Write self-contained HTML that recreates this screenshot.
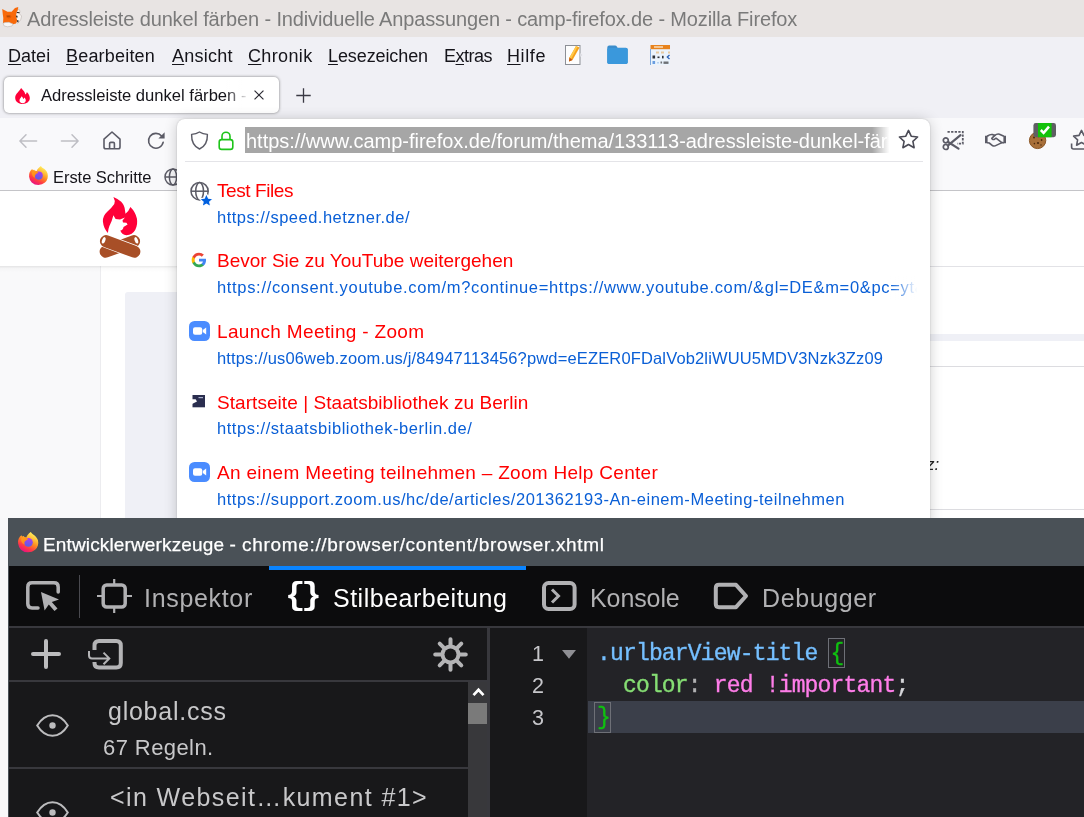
<!DOCTYPE html>
<html lang="de">
<head>
<meta charset="utf-8">
<title>Adressleiste dunkel färben - Individuelle Anpassungen - camp-firefox.de - Mozilla Firefox</title>
<style>
html,body{margin:0;padding:0;}
body{width:1084px;height:817px;overflow:hidden;position:relative;background:#fff;font-family:"Liberation Sans",sans-serif;color:#15141a;}
.abs{position:absolute;}
.t{position:absolute;white-space:pre;line-height:1;will-change:transform;}
svg{position:absolute;overflow:visible;}
/* title bar */
#titlebar{left:0;top:0;width:1084px;height:37px;background:#e8e4e3;}
#titletext{left:27px;top:8.7px;font-size:20px;color:#7a7a7a;letter-spacing:-0.14px;}
/* menubar + tabs */
#chrome{left:0;top:37px;width:1084px;height:81px;background:#f0f0f5;}
.menu{top:46.5px;font-size:18px;color:#15141a;}
.menu u{text-decoration:underline;text-underline-offset:2px;text-decoration-thickness:1px;}
#tab{left:4px;top:77px;width:275px;height:36px;background:#fff;border-radius:5px;box-shadow:0 0 3px rgba(0,0,0,.5);}
#tabtext{left:40.5px;top:88.4px;font-size:16.6px;width:208px;height:20px;overflow:hidden;letter-spacing:-0.01px;}
#tabfade{left:226px;top:80px;width:23px;height:30px;background:linear-gradient(90deg,rgba(255,255,255,0),#fff);}
/* navbar */
#navbar{left:0;top:118px;width:1084px;height:72px;background:#f9f9fb;}
#navline{left:0;top:190px;width:1084px;height:1px;background:#c4c4c8;}
#bm1{left:53px;top:168.5px;font-size:16.5px;letter-spacing:-0.05px;}
.rt{left:217.4px;font-size:19px;color:#ff0000;}
.ru{left:217.4px;font-size:16.5px;color:#0a5fd6;}
.dtt{top:586px;font-size:25px;}
.ln{left:531.5px;width:12px;text-align:right;font-size:21.5px;color:#c6c6ca;}
.mono{font-family:"Liberation Mono",monospace;font-size:23px;letter-spacing:-0.83px;-webkit-text-stroke-width:0.35px;}
</style>
</head>
<body>
<!-- ===== window title bar ===== -->
<div id="titlebar" class="abs"></div>
<svg id="foxicon" style="left:0;top:0" width="24" height="30" viewBox="0 0 24 30">
  <path d="M16.600 12.200 L18.500 8.800 L20 11 L19.400 13.800 L21.600 16 L20.800 19.400 L19.400 21.600 L17.500 23.400 L15.500 21 L15.500 15 Z" fill="#f6f3f1" stroke="#bdb6b1" stroke-width="0.600"/>
  <path d="M2.200 9.100 L7.500 11.800 L11.600 11.800 L15 8 L18.300 6.900 L17.700 10 L16.600 12.200 L16 16 L17.200 20.500 L16 23.500 L13 24.300 L9 22.500 L5 22.700 L3 23.500 L3.300 18 L2.800 14.400 Z" fill="#f8690a"/>
  <path d="M3 23.300 L5 22.500 L9 22.300 L13 24.100 L12 26 L7.500 26.800 L4.200 26 Z" fill="#f8f6f4" stroke="#bdb6b1" stroke-width="0.600"/>
  <path d="M6 15.600 L10.500 15.400 L11.500 16.400 L10.800 17.800 L8.500 18.400 L6.500 17.400 Z" fill="#e25a04"/>
  <path d="M6.600 15.700 L10.400 15.800 L9.600 16.500 L7.200 16.400 Z" fill="#8a3a08"/>
  <path d="M16 15.600 L17.400 15.800 L17.600 17.400 L16.300 17.600 Z M17.200 20 L18.600 20.400 L18.300 22.600 L17.200 22 Z M16.800 12 L19.600 12.300 L19.400 13.200 L16.900 13 Z" fill="#1e1a18"/>
</svg>
<div id="titletext" class="t">Adressleiste dunkel färben - Individuelle Anpassungen - camp-firefox.de - Mozilla Firefox</div>

<!-- ===== menu bar / tab strip ===== -->
<div id="chrome" class="abs"></div>
<div class="t menu" style="left:8.3px;letter-spacing:0.03px"><u>D</u>atei</div>
<div class="t menu" style="left:66.4px;letter-spacing:0.19px"><u>B</u>earbeiten</div>
<div class="t menu" style="left:171.7px;letter-spacing:0.25px"><u>A</u>nsicht</div>
<div class="t menu" style="left:248.4px;letter-spacing:0.35px"><u>C</u>hronik</div>
<div class="t menu" style="left:328px;letter-spacing:-0.1px"><u>L</u>esezeichen</div>
<div class="t menu" style="left:444px;letter-spacing:-0.5px">E<u>x</u>tras</div>
<div class="t menu" style="left:507px;letter-spacing:0.6px"><u>H</u>ilfe</div>
<!-- menu bar icons -->
<svg style="left:565px;top:45px" width="18" height="20" viewBox="0 0 18 20">
  <rect x="0.5" y="0.5" width="14.5" height="19" fill="#fdfdfd" stroke="#8c8f96" stroke-width="1"/>
  <path d="M11 1 L14.5 2.5 L7.5 15 L4 16.5 L4.5 12.5 Z" fill="#f7a21b"/>
  <path d="M11 1 L12.6 1.7 L5.8 14.6 L4.2 15 L4.5 12.5 Z" fill="#ffc94a"/>
  <path d="M4.5 12.5 L7.5 15 L4 16.5 Z" fill="#c0531a"/>
  <path d="M15 8 l2.5 2 l-2.5 2z" fill="#dcdce2"/>
</svg>
<svg style="left:606.5px;top:45px" width="21" height="20" viewBox="0 0 21 20">
  <path d="M0.3 2.5 Q0.3 0.6 2.2 0.6 L8 0.6 Q9.3 0.6 10 1.8 L10.6 2.8 L18.8 2.8 Q20.7 2.8 20.7 4.6 L20.7 17.2 Q20.7 19 18.8 19 L2.2 19 Q0.3 19 0.3 17.2 Z" fill="#3b8dcc"/>
  <path d="M0.3 4.6 Q0.3 2.9 2.2 2.9 L18.8 2.9 Q20.7 2.9 20.7 4.6 L20.7 17.2 Q20.7 19 18.8 19 L2.2 19 Q0.3 19 0.3 17.2 Z" fill="#3a98dc"/>
</svg>
<svg style="left:650px;top:45px" width="20" height="20" viewBox="0 0 20 20">
  <rect x="0" y="0" width="20" height="20" fill="#eaf3fc"/>
  <rect x="0.5" y="0" width="19.5" height="4.2" fill="#e8831d"/>
  <rect x="4" y="1.3" width="9" height="1.4" fill="#fbe3c4"/>
  <rect x="0" y="4" width="1" height="16" fill="#7fa9dc"/>
  <g fill="#e6c9a0"><rect x="6" y="6.5" width="3" height="2"/><rect x="11" y="6.5" width="3" height="2"/><rect x="18" y="6.5" width="2" height="2"/></g>
  <g fill="#2c3138"><rect x="2.5" y="10.5" width="2.6" height="3"/><rect x="7.5" y="11.5" width="2" height="1.6"/><rect x="12" y="10.8" width="1.6" height="2.6"/></g>
  <path d="M19.5 10 l-2.2 2 l2.2 2" stroke="#2b62b8" stroke-width="1.3" fill="none"/>
  <rect x="2.5" y="16" width="2.6" height="3" fill="#6a9de0"/><rect x="7" y="17" width="2" height="1.5" fill="#b8d2f0"/>
  <g fill="#6d7075"><rect x="10.5" y="16.5" width="1.6" height="2"/><rect x="13.5" y="16.5" width="5" height="2.4"/></g>
</svg>
<!-- selected tab -->
<div id="tab" class="abs"></div>
<svg style="left:15px;top:87.5px" width="15" height="16" viewBox="0 0 15 16">
  <path d="M6.2 0 C7.6 2.4 10.3 3.6 10.2 6.6 C11.2 6 11.7 4.9 11.8 4 C13.9 6 15 8.3 14.8 10.6 C14.5 13.8 11.6 16 7.6 16 C3.4 16 0.3 13.6 0.2 10 C0.1 6.4 3.2 4.2 4.6 2.2 C5.2 1.4 5.8 0.7 6.2 0 Z" fill="#ff0039"/>
  <path d="M7.6 15.2 C5.6 15.2 4.4 13.9 4.5 12.3 C4.6 10.6 6 9.8 6.7 8.3 C7.6 9.2 8 10 8.1 11 C8.7 10.6 9.1 10 9.2 9.4 C10.4 10.4 10.9 11.5 10.8 12.6 C10.7 14.2 9.4 15.2 7.6 15.2 Z" fill="#fff"/>
</svg>
<div id="tabtext" class="t">Adressleiste dunkel färben - Individuelle Anpassungen</div>
<div id="tabfade" class="abs"></div>
<svg style="left:254px;top:90.3px" width="10" height="10" viewBox="0 0 11 11"><path d="M0.6 0.6 L10.4 10.4 M10.4 0.6 L0.6 10.4" stroke="#2b2a33" stroke-width="1.3" fill="none"/></svg>
<svg style="left:296.300px;top:88.100px" width="15" height="15" viewBox="0 0 16 16"><path d="M8 0.3 V15.7 M0.3 8 H15.7" stroke="#3a3944" stroke-width="1.4" fill="none"/></svg>

<!-- ===== navigation toolbar + bookmarks toolbar ===== -->
<div id="navbar" class="abs"></div>
<div id="navline" class="abs"></div>
<svg style="left:19px;top:133.5px" width="18" height="14" viewBox="0 0 18 14"><path d="M17.6 7 H1.2 M7 0.8 L0.9 7 L7 13.2" stroke="#bebec4" stroke-width="1.5" fill="none" stroke-linecap="round" stroke-linejoin="round"/></svg>
<svg style="left:61px;top:133.5px" width="18" height="14" viewBox="0 0 18 14"><path d="M0.4 7 H16.8 M11 0.8 L17.1 7 L11 13.2" stroke="#bebec4" stroke-width="1.5" fill="none" stroke-linecap="round" stroke-linejoin="round"/></svg>
<svg style="left:103px;top:131px" width="18" height="19" viewBox="0 0 18 19"><path d="M1 8.2 L9 1 L17 8.2 V16 Q17 17.8 15.2 17.8 H2.8 Q1 17.8 1 16 Z M6.6 17.6 V12.6 Q6.6 11.4 7.8 11.4 H10.2 Q11.4 11.4 11.4 12.6 V17.6" stroke="#5b5b66" stroke-width="1.6" fill="none" stroke-linejoin="round"/></svg>
<svg style="left:147px;top:131px" width="19" height="19" viewBox="0 0 19 19"><path d="M16.2 11.2 A7.4 7.4 0 1 1 14.6 5" stroke="#5b5b66" stroke-width="1.6" fill="none" stroke-linecap="round"/><path d="M17.6 1.2 V7.4 H11.4 Z" fill="#5b5b66"/></svg>
<!-- bookmarks -->
<svg width="0" height="0" style="left:0;top:0"><defs>
<linearGradient id="fxg" x1="0.800" y1="0.080" x2="0.300" y2="0.980"><stop offset="0" stop-color="#fff060"/><stop offset="0.250" stop-color="#ffc13a"/><stop offset="0.480" stop-color="#ff8a20"/><stop offset="0.750" stop-color="#ff3b44"/><stop offset="1" stop-color="#ea1081"/></linearGradient>
<linearGradient id="fxp" x1="0.600" y1="0" x2="0.400" y2="1"><stop offset="0" stop-color="#b13af2"/><stop offset="1" stop-color="#5560e4"/></linearGradient>
<linearGradient id="fxa" x1="0" y1="0" x2="1" y2="1"><stop offset="0" stop-color="#ffa11c"/><stop offset="1" stop-color="#ff7a1c"/></linearGradient>
<g id="fxlogo"><path d="M12.750 0 Q14 1.800 15.200 2.500 Q16.800 3.300 17.650 4.420 Q19.200 6.100 19.900 8 Q20.600 10.600 19.900 13.400 Q19.100 16.100 17.160 17.800 Q14.200 20.350 10.050 20.350 Q5.900 20.350 2.940 17.650 Q0.500 15.200 0.100 11.600 Q-0.200 8.600 0.740 6.600 Q1.900 4.100 3.430 3.200 Q3.700 4.200 4.400 4.400 Q5 3.800 5.640 3.930 Q6.300 4.800 6.870 5.150 L8.300 5.400 Q8.800 3.800 9.800 2.800 Q11 1.200 12.750 0 Z" fill="url(#fxg)"/><circle cx="10.400" cy="10.300" r="4.400" fill="url(#fxp)"/><path d="M3.400 6.500 Q5.500 5.300 8.300 5.600 Q10 6.600 10 7.600 Q8.800 8 8 8.400 Q6.600 9.200 6.400 10.600 Q6.300 11.600 6.700 12.600 Q4.500 12 3.600 9.800 Q3 8 3.400 6.500 Z" fill="url(#fxa)"/></g>
</defs></svg>
<svg style="left:28.5px;top:166px" width="19" height="19" viewBox="0 0 20.400 20.400"><use href="#fxlogo"/></svg>
<div id="bm1" class="t">Erste Schritte</div>
<svg style="left:164px;top:167.5px" width="18" height="18" viewBox="0 0 18 18"><g stroke="#5b5b66" stroke-width="1.5" fill="none"><circle cx="9" cy="9" r="8"/><ellipse cx="9" cy="9" rx="3.6" ry="8"/><path d="M1 9 H17"/></g></svg>
<!-- ===== page content (behind popup) ===== -->
<div class="abs" style="left:0;top:191px;width:1084px;height:75px;background:#fff;"></div>
<div class="abs" style="left:0;top:266px;width:1084px;height:252px;background:#f9f9fa;"></div>
<div class="abs" style="left:100px;top:266px;width:984px;height:252px;background:#fff;border-left:1px solid #ececef;box-sizing:border-box;"></div>
<div class="abs" style="left:0;top:266px;width:1084px;height:6px;background:linear-gradient(180deg,rgba(0,0,0,.085),rgba(0,0,0,.02) 40%,rgba(0,0,0,0));"></div>
<div class="abs" style="left:125px;top:291.5px;width:959px;height:49px;background:#eff0f6;border-radius:3px 0 0 0;"></div>
<div class="abs" style="left:125px;top:334px;width:959px;height:184px;background:#eff0f6;"></div>
<div class="abs" style="left:930px;top:266px;width:154px;height:68px;background:#fff;"></div>
<div class="abs" style="left:930px;top:266px;width:154px;height:1px;background:#e2e2e6;"></div>
<div class="abs" style="left:930px;top:341px;width:154px;height:177px;background:#fff;"></div>
<div class="abs" style="left:930px;top:366px;width:154px;height:1px;background:#dcdce0;"></div>
<div class="abs" style="left:930px;top:509px;width:154px;height:1px;background:#dcdce0;"></div>
<div class="t" style="left:925.500px;top:456px;font-size:17px;font-style:italic;color:#222;">z:</div>
<!-- campfire logo -->
<svg style="left:90px;top:190px" width="60" height="75" viewBox="0 0 60 75">
  <path d="M23.4 6.9 Q27.500 8.200 31.200 11.800 Q34.800 15.600 35.100 21 L35.500 23.800 Q38.600 21.500 40.400 17 Q45.500 22 46.900 28.500 Q48 34.500 45.200 40 Q42.500 44.800 36.500 45.200 Q31.500 44.800 30.300 40.600 Q33 40.200 33.500 37 L37.600 34.400 L36.400 32.800 L33 32.600 L32.500 30.600 L34.900 27.500 L30 29.500 L25.600 29 L23.400 25.200 Q22 31 19.400 36 Q18 39.500 17.900 42.900 Q13.600 38.500 12.900 31.500 Q12.600 26 17 22 Q22 17.500 24.300 14 Q25.500 10.500 23.400 6.900 Z" fill="#ff0039"/>
  <g transform="rotate(-20.250 29.850 56.400)"><rect x="8.700" y="50.300" width="42.300" height="12.200" rx="6.100" fill="#a84f27"/><ellipse cx="47.400" cy="56.400" rx="1.600" ry="3.400" fill="#fff"/></g>
  <g transform="rotate(20.250 30.150 56.400)"><rect x="8.300" y="49.600" width="43.700" height="13.600" rx="6.800" fill="#fff"/><rect x="9" y="50.300" width="42.300" height="12.200" rx="6.100" fill="#a84f27"/><ellipse cx="12.600" cy="56.400" rx="1.600" ry="3.400" fill="#fff"/></g>
</svg>

<!-- ===== urlbar popup ===== -->
<div id="urlbar" class="abs" style="left:177px;top:119px;width:753px;height:410px;background:#fff;border-radius:8px 8px 0 0;box-shadow:0 1px 14px rgba(0,0,0,.20),0 0 2px rgba(0,0,0,.20);"></div>
<svg style="left:189.5px;top:131px" width="19" height="19" viewBox="0 0 19 19"><path d="M9.5 1 C12 2.6 14.6 3.2 17.4 3.4 C17.6 10.2 15 15.4 9.5 18 C4 15.4 1.4 10.2 1.6 3.4 C4.4 3.2 7 2.6 9.5 1 Z" stroke="#5b5b66" stroke-width="1.450" fill="none" stroke-linejoin="round"/></svg>
<svg style="left:218px;top:130.5px" width="16" height="20" viewBox="0 0 16 20"><path d="M4 8.5 V5.2 A4 4 0 0 1 12 5.2 V8.5" stroke="#1ec41a" stroke-width="1.600" fill="none"/><rect x="1.2" y="8.6" width="13.6" height="9.8" rx="2.4" stroke="#1ec41a" stroke-width="1.600" fill="none"/></svg>
<div class="abs" style="left:245px;top:127px;width:645px;height:25.600px;background:#a6a6a6;"></div>
<div class="t" style="left:246px;top:131px;font-size:20px;color:#fff;width:644px;height:24px;overflow:hidden;letter-spacing:-0.025px;">https://www.camp-firefox.de/forum/thema/133113-adressleiste-dunkel-färben/</div>
<div class="abs" style="left:872px;top:126px;width:19px;height:27px;background:linear-gradient(90deg,rgba(255,255,255,0),#fff 92%);"></div>
<svg style="left:897.5px;top:129px" width="21" height="21" viewBox="0 0 21 21"><path d="M10.5 1.4 L13.2 7.2 L19.6 8 L14.9 12.3 L16.1 18.7 L10.5 15.5 L4.9 18.7 L6.1 12.3 L1.4 8 L7.8 7.2 Z" stroke="#4a4a55" stroke-width="1.6" fill="none" stroke-linejoin="round"/></svg>
<div class="abs" style="left:185px;top:161px;width:738px;height:1px;background:#e4e4e8;"></div>
<!-- result 1 -->
<svg style="left:190px;top:181.500px" width="24" height="26" viewBox="0 0 24 26"><g stroke="#5b5b66" stroke-width="1.500" fill="none"><circle cx="9.600" cy="9.200" r="8.600"/><ellipse cx="9.600" cy="9.200" rx="3.900" ry="8.600"/><path d="M1 9.200 H18.200"/></g><path d="M16.400 11.600 L18.500 16.100 L23.400 16.600 L19.700 19.900 L20.800 24.800 L16.400 22.300 L12 24.800 L13.100 19.900 L9.400 16.600 L14.300 16.100 Z" fill="#0060df" stroke="#fff" stroke-width="1.200"/></svg>
<div class="t rt" style="top:181px;letter-spacing:-0.42px">Test Files</div>
<div class="t ru" style="top:209px;letter-spacing:0.49px">https://speed.hetzner.de/</div>
<!-- result 2 -->
<svg style="left:191px;top:252.300px" width="16" height="16" viewBox="0 0 48 48"><path fill="#4285F4" d="M45.1 24.5c0-1.6-.1-3.1-.4-4.5H24v8.5h11.8c-.5 2.8-2.1 5.100-4.400 6.700v5.500h7.100c4.200-3.800 6.600-9.500 6.600-16.200z"/><path fill="#34A853" d="M24 46c5.900 0 10.900-2 14.500-5.300l-7.100-5.500c-2 1.300-4.500 2.100-7.400 2.100-5.700 0-10.500-3.800-12.300-9H4.400v5.700C8 41.100 15.400 46 24 46z"/><path fill="#FBBC05" d="M11.700 28.300c-.4-1.300-.7-2.800-.7-4.300s.3-2.900.7-4.300v-5.700H4.400C2.900 17 2 20.400 2 24s.9 7 2.400 10l7.300-5.700z"/><path fill="#EA4335" d="M24 10.800c3.200 0 6.100 1.100 8.400 3.300l6.300-6.300C34.900 4.200 29.900 2 24 2 15.400 2 8 6.900 4.400 14l7.300 5.700c1.800-5.200 6.600-8.900 12.300-8.900z"/></svg>
<div class="t rt" style="top:251px;letter-spacing:0.005px">Bevor Sie zu YouTube weitergehen</div>
<div class="t ru" style="top:279px;width:703px;overflow:hidden;letter-spacing:0.67px">https://consent.youtube.com/m?continue=https://www.youtube.com/&amp;gl=DE&amp;m=0&amp;pc=yt&amp;uxe=23983172</div>
<div class="abs" style="left:890px;top:276px;width:32px;height:24px;background:linear-gradient(90deg,rgba(255,255,255,0),#fff 85%);"></div>
<!-- result 3 -->
<svg style="left:189px;top:321px" width="21" height="20" viewBox="0 0 21 20"><rect x="0" y="0" width="21" height="20" rx="5.5" fill="#4a8cff"/><rect x="4" y="6.2" width="9.2" height="7.6" rx="2" fill="#fff"/><path d="M13.8 9 L17.2 6.6 V13.4 L13.8 11 Z" fill="#fff"/></svg>
<div class="t rt" style="top:322px;letter-spacing:0.32px">Launch Meeting - Zoom</div>
<div class="t ru" style="top:350px;letter-spacing:0.15px">https://us06web.zoom.us/j/84947113456?pwd=eEZER0FDalVob2liWUU5MDV3Nzk3Zz09</div>
<!-- result 4 -->
<svg style="left:192px;top:395px" width="13" height="13" viewBox="0 0 13 13"><rect x="0.5" y="0" width="12.5" height="12.3" fill="#2a2e4f"/><path d="M0 4.2 L3.6 4.2 L5 6.6 L0 9 Z" fill="#fff"/><rect x="6.5" y="2" width="4.5" height="1.2" fill="#aab0cc"/></svg>
<div class="t rt" style="top:393px;letter-spacing:0.057px">Startseite | Staatsbibliothek zu Berlin</div>
<div class="t ru" style="top:420px;letter-spacing:0.533px">https://staatsbibliothek-berlin.de/</div>
<!-- result 5 -->
<svg style="left:189px;top:462px" width="21" height="20" viewBox="0 0 21 20"><rect x="0" y="0" width="21" height="20" rx="5.5" fill="#4a8cff"/><rect x="4" y="6.2" width="9.2" height="7.6" rx="2" fill="#fff"/><path d="M13.8 9 L17.2 6.6 V13.4 L13.8 11 Z" fill="#fff"/></svg>
<div class="t rt" style="top:463px;letter-spacing:0.29px">An einem Meeting teilnehmen – Zoom Help Center</div>
<div class="t ru" style="top:491px;letter-spacing:0.54px">https://support.zoom.us/hc/de/articles/201362193-An-einem-Meeting-teilnehmen</div>
<!-- toolbar buttons right of urlbar -->
<svg style="left:942px;top:130px" width="22" height="21" viewBox="0 0 22 21"><g stroke="#5b5b66" fill="none"><path d="M5.500 1.800 H20.800 V13.600 H15" stroke-width="1.800" stroke-dasharray="2.300 1.300"/><circle cx="3.800" cy="10.300" r="2.500" stroke-width="1.700"/><circle cx="3.800" cy="17" r="2.500" stroke-width="1.700"/><path d="M5.800 11.800 L16.500 18.600 M5.800 15.600 L18.500 5.200" stroke-linecap="round" stroke-width="2.200"/></g></svg>
<svg style="left:985px;top:133px" width="21" height="14" viewBox="0 0 21 14"><g stroke="#5b5b66" fill="none" stroke-linejoin="round" stroke-linecap="round"><path d="M1.300 2.800 V10.300 M19.700 2.800 V10.300" stroke-width="2.600" stroke-linecap="butt"/><path d="M2.600 3 Q5 1.200 7.600 1.600 L9.800 2.400 Q12 0.600 14.400 1.200 L18.400 3" stroke-width="1.600"/><path d="M2.600 9.800 L4.200 10 L7.800 12.800 Q9.600 13.400 11.200 12.400 L17 9.600 L18.400 9.800" stroke-width="1.600"/><path d="M9.800 2.400 L6.800 5.400 Q7.600 7.200 9.600 6.200 L11 5.200 L16.800 9.600" stroke-width="1.600"/></g></svg>
<svg style="left:1029px;top:122px" width="28" height="28" viewBox="0 0 28 28">
  <circle cx="8.6" cy="18.4" r="8.2" fill="#a8703a"/>
  <circle cx="8.6" cy="18.4" r="8.2" fill="none" stroke="#8a5626" stroke-width="1"/>
  <g fill="#4a2a10"><circle cx="5" cy="15.5" r="1"/><circle cx="9" cy="21" r="1.1"/><circle cx="12.6" cy="18" r="0.9"/><circle cx="5.4" cy="21.6" r="0.8"/><circle cx="9.4" cy="14.4" r="0.8"/><circle cx="12" cy="23" r="0.7"/></g>
  <rect x="4.4" y="1" width="22.6" height="14.2" rx="2.4" fill="#5f5f63"/>
  <rect x="9" y="1" width="13.6" height="14.2" fill="#12c20a"/>
  <path d="M11.8 8 L14.6 10.8 L20 4.6" stroke="#fff" stroke-width="2.5" fill="none"/>
</svg>
<svg style="left:1070px;top:129px" width="22" height="22" viewBox="0 0 22 22"><g stroke="#5b5b66" fill="none" stroke-width="1.6" stroke-linejoin="round"><path d="M11.5 1.4 L13.9 6.4 L19.4 7.1 L15.4 10.8 L16.4 16.2 L11.5 13.5 L6.6 16.2 L7.6 10.8 L3.6 7.100 L9.1 6.400 Z"/><path d="M1.6 14.5 V18 Q1.6 20 3.600 20 H22"/></g></svg>

<!-- ===== developer tools window ===== -->
<div class="abs" style="left:0;top:518px;width:8px;height:299px;background:#f8f8f9;"></div>
<div id="dt" class="abs" style="left:8px;top:518px;width:1076px;height:299px;background:#232327;"></div>
<div id="dttitle" class="abs" style="left:8px;top:518px;width:1076px;height:48px;background:#4a5157;"></div>
<svg style="left:17.800px;top:531.800px" width="20.400" height="20.400" viewBox="0 0 20.400 20.400"><use href="#fxlogo"/></svg>
<div class="t" style="left:43.2px;top:535px;font-size:19px;color:#fff;letter-spacing:0.14px;-webkit-text-stroke-width:0.25px;">Entwicklerwerkzeuge - </div>
<div class="t" style="left:241.6px;top:535px;font-size:19px;color:#fff;letter-spacing:0.68px;-webkit-text-stroke-width:0.25px;">chrome://browser/content/browser.xhtml</div>
<div id="dttabs" class="abs" style="left:8px;top:566px;width:1076px;height:60px;background:#0c0c0d;"></div>
<div class="abs" style="left:8px;top:626px;width:1076px;height:2px;background:#38383d;"></div>
<div class="abs" style="left:269px;top:566px;width:256.5px;height:4px;background:#0a84ff;"></div>
<!-- element picker -->
<svg style="left:26px;top:581px" width="35" height="30" viewBox="0 0 35 30"><path d="M12 27 H6 Q1.800 27 1.800 22.800 V6 Q1.800 1.800 6 1.800 H28 Q32.200 1.800 32.200 6 V11" stroke="#b1b1b3" stroke-width="3.500" fill="none" stroke-linecap="round"/><path d="M15 11 L33 18.500 L25.800 21 L31.500 27.400 L28.500 30 L22.800 23.500 L18.600 29.500 Z" fill="#b1b1b3"/></svg>
<div class="abs" style="left:79px;top:575px;width:1px;height:43px;background:#4a4a4f;"></div>
<!-- inspector -->
<svg style="left:97px;top:579px" width="35" height="34" viewBox="0 0 35 34"><g stroke="#b1b1b3" stroke-width="3.500" fill="none"><rect x="6.200" y="6" width="22" height="22" rx="3.500"/></g><g stroke="#b1b1b3" stroke-width="2.200" fill="none"><path d="M17.200 0 V6 M17.200 28 V34 M0 17 H6 M28.400 17 H35"/></g></svg>
<div class="t dtt" style="left:143.500px;color:#b1b1b3;letter-spacing:0.68px">Inspektor</div>
<!-- style editor (selected) -->
<div class="t" style="left:285px;top:579.5px;font-size:31px;font-weight:bold;color:#fff;font-family:'Liberation Mono',monospace;letter-spacing:-3.800px;transform:scaleX(1.100);transform-origin:0 0">{}</div>
<div class="t dtt" style="left:333.300px;color:#fff;letter-spacing:0.5px">Stilbearbeitung</div>
<!-- console -->
<svg style="left:542px;top:581px" width="35" height="30" viewBox="0 0 35 30"><rect x="2" y="2" width="30.600" height="26" rx="4.500" stroke="#b1b1b3" stroke-width="4" fill="none"/><path d="M10 8.500 L16.500 15 L10 21.500" stroke="#b1b1b3" stroke-width="3" fill="none"/></svg>
<div class="t dtt" style="left:589.500px;color:#b1b1b3;letter-spacing:-0.1px">Konsole</div>
<!-- debugger -->
<svg style="left:714px;top:583px" width="34" height="26" viewBox="0 0 34 26"><path d="M5 1.800 H22 L32 13 L22 24.200 H5 Q1.800 24.200 1.800 21 V5 Q1.800 1.800 5 1.800 Z" stroke="#b1b1b3" stroke-width="4" fill="none" stroke-linejoin="round"/></svg>
<div class="t dtt" style="left:761.500px;color:#b1b1b3;letter-spacing:0.6px">Debugger</div>

<!-- sidebar -->
<div class="abs" style="left:8px;top:628px;width:479px;height:189px;background:#18181a;"></div>
<div class="abs" style="left:8px;top:680px;width:479px;height:2px;background:#38383d;"></div>
<div class="abs" style="left:487px;top:628px;width:3px;height:189px;background:#38383d;"></div>
<svg style="left:30.500px;top:639px" width="30" height="30" viewBox="0 0 30 30"><path d="M15 2 V28 M2 15 H28" stroke="#bcbcbe" stroke-width="4" fill="none" stroke-linecap="round"/></svg>
<svg style="left:88px;top:638.800px" width="35" height="31" viewBox="0 0 35 31"><path d="M6.500 11 V6.500 Q6.500 2 11 2 H28.300 Q32.800 2 32.800 6.500 V24 Q32.800 28.500 28.300 28.500 H11 Q6.500 28.500 6.500 24 V23" stroke="#b4b4b6" stroke-width="4" fill="none"/><path d="M1 12 V16.500 Q1 19.400 4 19.400 H20.500 M15.500 13.600 L21.300 19.400 L15.500 25.200" stroke="#b4b4b6" stroke-width="2" fill="none"/></svg>
<svg style="left:433px;top:636.500px" width="35" height="35" viewBox="-17.500 -17.500 35 35"><g stroke="#b4b4b6" stroke-width="4" stroke-linecap="round"><path d="M0 -15.300 V15.300 M-15.300 0 H15.300 M-10.800 -10.800 L10.800 10.800 M-10.800 10.800 L10.800 -10.800"/></g><circle r="10" fill="#b4b4b6"/><circle r="6" fill="#18181a"/></svg>
<!-- sidebar scrollbar -->
<div class="abs" style="left:468px;top:682px;width:19px;height:135px;background:#38383b;"></div>
<svg style="left:472px;top:687px" width="13" height="10" viewBox="0 0 13 10"><path d="M1.500 8.200 L6.500 2.800 L11.500 8.200" stroke="#fff" stroke-width="2.700" fill="none"/></svg>
<div class="abs" style="left:468.300px;top:703px;width:18.400px;height:20.700px;background:#7a7a7a;"></div>
<!-- sheet list -->
<div class="abs" style="left:8px;top:767px;width:460px;height:2px;background:#38383d;"></div>
<svg style="left:35.500px;top:714px" width="33" height="23" viewBox="0 0 33 23"><path d="M1.200 11.500 Q7.500 1.200 16.500 1.200 Q25.500 1.200 31.800 11.500 Q25.500 21.800 16.500 21.800 Q7.500 21.800 1.200 11.500 Z" stroke="#bcbcbe" stroke-width="2" fill="none"/><circle cx="16.500" cy="11.500" r="3.200" fill="#bcbcbe"/></svg>
<div class="t" style="left:107.500px;top:699px;font-size:25px;color:#c8c8ca;letter-spacing:0.75px">global.css</div>
<div class="t" style="left:103.200px;top:737px;font-size:22px;color:#c8c8ca;letter-spacing:0.42px">67 Regeln.</div>
<svg style="left:35.500px;top:800.500px" width="33" height="23" viewBox="0 0 33 23"><path d="M1.200 11.500 Q7.500 1.200 16.500 1.200 Q25.500 1.200 31.800 11.500 Q25.500 21.800 16.500 21.800 Q7.500 21.800 1.200 11.500 Z" stroke="#bcbcbe" stroke-width="2" fill="none"/><circle cx="16.500" cy="11.500" r="3.200" fill="#bcbcbe"/></svg>
<div class="t" style="left:110px;top:784.500px;font-size:25px;color:#c8c8ca;letter-spacing:1.40px">&lt;in Webseit…kument #1&gt;</div>

<!-- editor -->
<div class="abs" style="left:490px;top:628px;width:97px;height:189px;background:#18181a;"></div>
<div class="abs" style="left:587.500px;top:701px;width:497px;height:32px;background:#3b3f4a;"></div>
<div class="t ln" style="top:643.500px">1</div>
<div class="t ln" style="top:675.500px">2</div>
<div class="t ln" style="top:707.500px">3</div>
<svg style="left:561.500px;top:650px" width="14" height="9" viewBox="0 0 14 9"><path d="M0 0 H14 L7 8.800 Z" fill="#8f8f94"/></svg>
<div class="abs" style="left:828px;top:638px;width:17px;height:30px;border:1px solid #6e7077;box-sizing:border-box;"></div>
<div class="abs" style="left:594px;top:701.500px;width:17px;height:31px;border:1px solid #6e7077;box-sizing:border-box;"></div>
<div class="t mono" style="left:596.500px;top:642.7px"><span style="color:#75bfff">.urlbarView-title</span> <span style="color:#10c010">{</span></div>
<div class="t mono" style="left:596.500px;top:674.7px">  <span style="color:#86de74">color</span><span style="color:#b1b1b3">:</span> <span style="color:#ff7de9">red !important</span><span style="color:#d7d7db">;</span></div>
<div class="t mono" style="left:596.500px;top:706.7px"><span style="color:#10c010">}</span></div>
<div class="abs" style="left:8px;top:566px;width:1px;height:251px;background:#4a5157;"></div>

</body>
</html>
